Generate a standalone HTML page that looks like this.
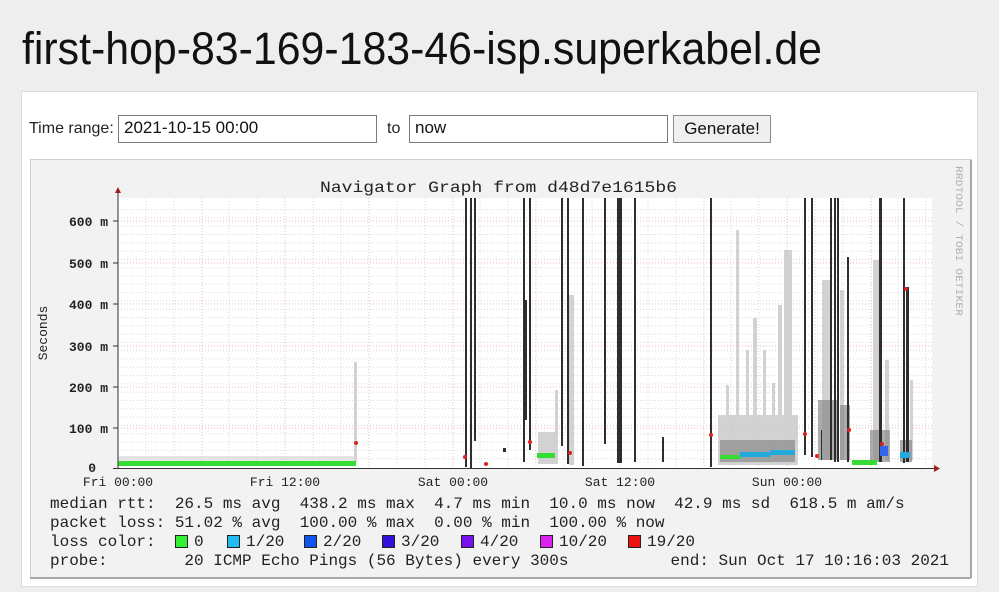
<!DOCTYPE html>
<html><head><meta charset="utf-8"><style>
html,body{margin:0;padding:0;}
body{width:999px;height:592px;background:#eeeeee;position:relative;overflow:hidden;font-family:"Liberation Sans",sans-serif;}
.panel{position:absolute;left:21px;top:91px;width:957px;height:496px;background:#fff;border:1px solid #dcdcdc;box-sizing:border-box;}
.lbl{position:absolute;font-size:16px;color:#222;}
.inp{position:absolute;height:28px;border:1px solid #7a7a7a;box-sizing:border-box;background:#fff;font-size:17px;padding:2px 5px;color:#111;}
.btn{position:absolute;left:673px;top:115px;width:98px;height:28px;border:1px solid #8a8a8a;box-sizing:border-box;background:#efefef;font-size:17px;text-align:center;line-height:25px;color:#111;}
svg{position:absolute;left:0;top:0;}
svg text{white-space:pre;}
</style></head><body>
<svg width="999" height="592" style="z-index:0">
<text x="22" y="64" font-family="Liberation Sans, sans-serif" font-size="45" fill="#111" textLength="800" lengthAdjust="spacingAndGlyphs">first-hop-83-169-183-46-isp.superkabel.de</text>
</svg>
<div class="panel"></div>
<div class="lbl" style="left:29px;top:120px">Time range:</div>
<div class="inp" style="left:118px;top:115px;width:259px">2021-10-15 00:00</div>
<div class="lbl" style="left:387px;top:120px">to</div>
<div class="inp" style="left:409px;top:115px;width:259px">now</div>
<div class="btn">Generate!</div>
<svg width="999" height="592" style="z-index:2" font-family="Liberation Mono, DejaVu Sans Mono, monospace">
<rect x="30.5" y="159.5" width="941" height="418" fill="#f2f2f2" stroke="#cfcfcf"/>
<line x1="971" y1="160" x2="971" y2="578" stroke="#a8a8a8" stroke-width="2"/>
<line x1="30" y1="578" x2="971" y2="578" stroke="#a8a8a8" stroke-width="2"/>
<rect x="118" y="198" width="814" height="270" fill="#ffffff"/>
<g stroke="#d8d8d8" stroke-width="1" stroke-dasharray="1,2">
<line x1="118" y1="209.6" x2="932" y2="209.6"/><line x1="118" y1="217.9" x2="932" y2="217.9"/><line x1="118" y1="226.2" x2="932" y2="226.2"/><line x1="118" y1="234.5" x2="932" y2="234.5"/><line x1="118" y1="242.8" x2="932" y2="242.8"/><line x1="118" y1="251.1" x2="932" y2="251.1"/><line x1="118" y1="259.4" x2="932" y2="259.4"/><line x1="118" y1="267.7" x2="932" y2="267.7"/><line x1="118" y1="276" x2="932" y2="276"/><line x1="118" y1="284.3" x2="932" y2="284.3"/><line x1="118" y1="292.6" x2="932" y2="292.6"/><line x1="118" y1="300.9" x2="932" y2="300.9"/><line x1="118" y1="309.2" x2="932" y2="309.2"/><line x1="118" y1="317.5" x2="932" y2="317.5"/><line x1="118" y1="325.8" x2="932" y2="325.8"/><line x1="118" y1="334.1" x2="932" y2="334.1"/><line x1="118" y1="342.4" x2="932" y2="342.4"/><line x1="118" y1="350.7" x2="932" y2="350.7"/><line x1="118" y1="359" x2="932" y2="359"/><line x1="118" y1="367.3" x2="932" y2="367.3"/><line x1="118" y1="375.6" x2="932" y2="375.6"/><line x1="118" y1="383.9" x2="932" y2="383.9"/><line x1="118" y1="392.2" x2="932" y2="392.2"/><line x1="118" y1="400.5" x2="932" y2="400.5"/><line x1="118" y1="408.8" x2="932" y2="408.8"/><line x1="118" y1="417.1" x2="932" y2="417.1"/><line x1="118" y1="425.4" x2="932" y2="425.4"/><line x1="118" y1="433.7" x2="932" y2="433.7"/><line x1="118" y1="442" x2="932" y2="442"/><line x1="118" y1="450.3" x2="932" y2="450.3"/><line x1="118" y1="458.6" x2="932" y2="458.6"/>
<line x1="146" y1="198" x2="146" y2="468"/><line x1="174" y1="198" x2="174" y2="468"/><line x1="229" y1="198" x2="229" y2="468"/><line x1="257" y1="198" x2="257" y2="468"/><line x1="313" y1="198" x2="313" y2="468"/><line x1="341" y1="198" x2="341" y2="468"/><line x1="397" y1="198" x2="397" y2="468"/><line x1="425" y1="198" x2="425" y2="468"/><line x1="480" y1="198" x2="480" y2="468"/><line x1="508" y1="198" x2="508" y2="468"/><line x1="564" y1="198" x2="564" y2="468"/><line x1="592" y1="198" x2="592" y2="468"/><line x1="648" y1="198" x2="648" y2="468"/><line x1="676" y1="198" x2="676" y2="468"/><line x1="731" y1="198" x2="731" y2="468"/><line x1="759" y1="198" x2="759" y2="468"/><line x1="815" y1="198" x2="815" y2="468"/><line x1="843" y1="198" x2="843" y2="468"/><line x1="898" y1="198" x2="898" y2="468"/><line x1="926" y1="198" x2="926" y2="468"/>
</g>
<g stroke="#f0b8b0" stroke-width="1" stroke-dasharray="1,2">
<line x1="118" y1="221" x2="932" y2="221"/><line x1="118" y1="263" x2="932" y2="263"/><line x1="118" y1="304" x2="932" y2="304"/><line x1="118" y1="346" x2="932" y2="346"/><line x1="118" y1="387" x2="932" y2="387"/><line x1="118" y1="428" x2="932" y2="428"/>
<line x1="202" y1="198" x2="202" y2="468"/><line x1="285" y1="198" x2="285" y2="468"/><line x1="369" y1="198" x2="369" y2="468"/><line x1="453" y1="198" x2="453" y2="468"/><line x1="536" y1="198" x2="536" y2="468"/><line x1="620" y1="198" x2="620" y2="468"/><line x1="704" y1="198" x2="704" y2="468"/><line x1="787" y1="198" x2="787" y2="468"/><line x1="871" y1="198" x2="871" y2="468"/>
</g>
<g fill="#c8c8c8" opacity="0.8">
<rect x="354" y="362" width="3" height="100"/>
<rect x="538" y="432" width="20" height="32"/><rect x="555" y="390" width="3" height="70"/>
<rect x="569" y="295" width="5" height="170"/>
<rect x="718" y="415" width="80" height="50"/>
<rect x="726" y="385" width="3" height="60"/><rect x="736" y="230" width="3" height="220"/><rect x="746" y="350" width="3" height="100"/><rect x="753" y="318" width="4" height="140"/><rect x="763" y="350" width="3" height="100"/><rect x="772" y="383" width="3" height="70"/><rect x="778" y="305" width="4" height="150"/><rect x="784" y="250" width="8" height="210"/>
<rect x="822" y="280" width="8" height="180"/><rect x="840" y="290" width="4" height="170"/><rect x="873" y="260" width="6" height="200"/><rect x="885" y="360" width="4" height="100"/><rect x="910" y="380" width="3" height="80"/>
</g>
<g fill="#8a8a8a" opacity="0.7">
<rect x="720" y="440" width="75" height="22"/><rect x="818" y="400" width="20" height="60"/><rect x="840" y="405" width="10" height="55"/><rect x="870" y="430" width="20" height="32"/><rect x="900" y="440" width="12" height="22"/>
</g>
<g fill="#2e2e2e">
<rect x="465" y="198" width="2" height="269"/><rect x="470" y="198" width="2" height="270"/><rect x="474" y="198" width="2" height="243"/>
<rect x="523" y="198" width="2" height="264"/><rect x="523" y="300" width="4" height="120"/><rect x="529" y="198" width="2" height="252"/>
<rect x="561" y="198" width="2" height="248"/><rect x="567" y="198" width="2" height="266"/><rect x="582" y="198" width="2" height="268"/>
<rect x="604" y="198" width="2" height="246"/><rect x="617" y="198" width="5" height="265"/><rect x="634" y="198" width="2" height="264"/>
<rect x="662" y="437" width="2" height="25"/><rect x="503" y="448" width="3" height="4"/>
<rect x="710" y="198" width="2" height="269"/>
<rect x="804" y="198" width="2" height="257"/><rect x="811" y="198" width="2" height="259"/><rect x="821" y="430" width="1" height="30"/>
<rect x="830" y="198" width="2" height="262"/><rect x="834" y="198" width="2" height="264"/><rect x="837" y="198" width="2" height="264"/><rect x="847" y="257" width="2" height="205"/>
<rect x="879" y="198" width="3" height="264"/><rect x="903" y="198" width="2" height="265"/><rect x="906" y="287" width="3" height="175"/>
</g>
<rect x="118" y="461" width="238" height="5" fill="#33dd33"/>
<rect x="118" y="456" width="238" height="5" fill="#d4d4d4" opacity="0.6"/>
<rect x="537" y="453" width="18" height="5" fill="#33dd33"/>
<rect x="720" y="455" width="20" height="4" fill="#33dd33"/><rect x="740" y="452" width="30" height="5" fill="#22aadd"/><rect x="770" y="450" width="25" height="5" fill="#22aadd"/>
<rect x="852" y="460" width="25" height="5" fill="#33dd33"/><rect x="880" y="446" width="8" height="10" fill="#3366ee"/><rect x="900" y="452" width="10" height="6" fill="#22aadd"/>
<g fill="#dd2222"><circle cx="356" cy="443" r="2"/><circle cx="465" cy="457" r="2"/><circle cx="486" cy="464" r="2"/><circle cx="530" cy="442" r="2"/><circle cx="570" cy="453" r="2"/><circle cx="711" cy="435" r="2"/><circle cx="805" cy="434" r="2"/><circle cx="817" cy="456" r="2"/><circle cx="849" cy="430" r="2"/><circle cx="906" cy="289" r="2"/><circle cx="882" cy="444" r="2"/></g>
<line x1="118" y1="192" x2="118" y2="469" stroke="#333"/>
<line x1="113" y1="468.5" x2="936" y2="468.5" stroke="#333"/>
<polygon points="115,193 121,193 118,187" fill="#a02020"/>
<polygon points="934,465 934,472 940,468.5" fill="#a02020"/>
<g stroke="#333"><line x1="113" y1="221" x2="118" y2="221"/><line x1="113" y1="263" x2="118" y2="263"/><line x1="113" y1="304" x2="118" y2="304"/><line x1="113" y1="346" x2="118" y2="346"/><line x1="113" y1="387" x2="118" y2="387"/><line x1="113" y1="428" x2="118" y2="428"/></g>
<g font-size="13" fill="#222" text-anchor="end" font-weight="bold">
<text x="108" y="226">600 m</text><text x="108" y="268">500 m</text><text x="108" y="309">400 m</text><text x="108" y="351">300 m</text><text x="108" y="392">200 m</text><text x="108" y="433">100 m</text><text x="96" y="472">0</text>
</g>
<g font-size="13" fill="#222" text-anchor="middle">
<text x="118" y="486">Fri 00:00</text><text x="285" y="486">Fri 12:00</text><text x="453" y="486">Sat 00:00</text><text x="620" y="486">Sat 12:00</text><text x="787" y="486">Sun 00:00</text>
</g>
<text transform="translate(47,333) rotate(-90)" font-size="13" fill="#222" text-anchor="middle">Seconds</text>
<text x="320" y="192" font-size="16" fill="#222" textLength="357" lengthAdjust="spacingAndGlyphs">Navigator Graph from d48d7e1615b6</text>
<text transform="translate(956,166) rotate(90)" font-size="10" fill="#b0b0b0" textLength="150" lengthAdjust="spacingAndGlyphs">RRDTOOL / TOBI OETIKER</text>
<g font-size="16" fill="#222">
<text x="50" y="508">median rtt:  26.5 ms avg  438.2 ms max  4.7 ms min  10.0 ms now  42.9 ms sd  618.5 m am/s</text>
<text x="50" y="527">packet loss: 51.02 % avg  100.00 % max  0.00 % min  100.00 % now</text>
<text x="50" y="546">loss color:</text>
<text x="194" y="546">0</text><text x="246" y="546">1/20</text><text x="323" y="546">2/20</text><text x="401" y="546">3/20</text><text x="480" y="546">4/20</text><text x="559" y="546">10/20</text><text x="647" y="546">19/20</text>
<text x="50" y="565">probe:        20 ICMP Echo Pings (56 Bytes) every 300s</text>
<text x="949" y="565" text-anchor="end">end: Sun Oct 17 10:16:03 2021</text>
</g>
<g stroke="#222" stroke-width="1">
<rect x="175.5" y="535.5" width="12" height="12" fill="#33ee33"/>
<rect x="227.5" y="535.5" width="12" height="12" fill="#22bbee"/>
<rect x="304.5" y="535.5" width="12" height="12" fill="#1155ee"/>
<rect x="382.5" y="535.5" width="12" height="12" fill="#3311dd"/>
<rect x="461.5" y="535.5" width="12" height="12" fill="#7711ee"/>
<rect x="540.5" y="535.5" width="12" height="12" fill="#dd22ee"/>
<rect x="628.5" y="535.5" width="12" height="12" fill="#ee1111"/>
</g>
</svg>
</body></html>
